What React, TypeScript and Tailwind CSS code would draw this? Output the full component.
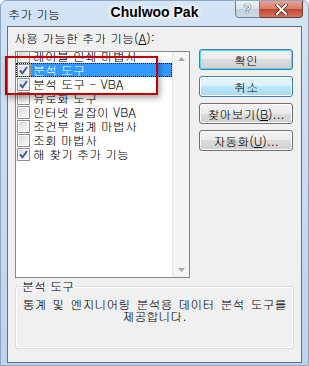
import React from 'react';

const ko = "font-['Gulim','Noto_Sans_CJK_KR',sans-serif]";

const items = [
  { label: '레이블 인쇄 마법사', checked: false },
  { label: '분석 도구', checked: true, selected: true },
  { label: '분석 도구 - VBA', checked: true },
  { label: '유로화 도구', checked: false },
  { label: '인터넷 길잡이 VBA', checked: false },
  { label: '조건부 합계 마법사', checked: false },
  { label: '조회 마법사', checked: false },
  { label: '해 찾기 추가 기능', checked: true },
];

const CheckBox: React.FC<{ checked: boolean }> = ({ checked }) => (
  <div className="w-[13px] h-[13px] shrink-0 border border-[#8e8f8f] bg-white p-[1px]">
    <div className="w-full h-full bg-gradient-to-br from-[#d8d8d8] to-[#fbfbfb] flex items-center justify-center">
      {checked && (
        <svg width="9" height="9" viewBox="0 0 9 9">
          <path d="M1 4.5 L3.5 7.2 L8 1" fill="none" stroke="#3d57ad" strokeWidth="1.9" />
        </svg>
      )}
    </div>
  </div>
);

const Button: React.FC<{ variant?: 'default' | 'hover' | 'normal'; children: React.ReactNode }> = ({
  variant = 'normal',
  children,
}) => {
  const outer =
    variant === 'default'
      ? 'border-[#3c7fb1] shadow-[inset_0_0_0_1px_#4fdcfc]'
      : variant === 'hover'
      ? 'border-[#3c7fb1] shadow-[inset_0_0_0_1px_#ffffff]'
      : 'border-[#707070] shadow-[inset_0_0_0_1px_#fbfbfb]';
  const fill =
    variant === 'hover'
      ? 'bg-[linear-gradient(#eaf6fd_0%,#d9f0fc_50%,#bee6fd_50%,#a7d9f5_100%)]'
      : 'bg-[linear-gradient(#f2f2f2_0%,#ebebeb_50%,#dddddd_50%,#cfcfcf_100%)]';
  return (
    <div
      className={`w-[94px] h-[21px] rounded-[3px] border ${outer} ${fill} flex items-center justify-center text-[12px] text-black`}
    >
      {children}
    </div>
  );
};

const App: React.FC = () => {
  return (
    <div
      className={`relative w-[309px] h-[366px] overflow-hidden rounded-t-[6px] border border-[#8ea8c4] bg-gradient-to-b from-[#d4e4f5] to-[#bcd3ec] flex flex-col ${ko}`}
    >
      {/* Title bar */}
      <div className="h-[25px] shrink-0 flex items-start">
        <div className="pl-[7px] pt-[6px] text-[12px] leading-[14px] text-black">추가 기능</div>
        <div className="flex-1" />
        <div className="flex mr-[5px] mt-[-1px]">
          <div className="w-[25px] h-[18px] rounded-bl-[4px] border border-[#6d7f94] bg-[linear-gradient(#eef3f8_0%,#d7e1ea_50%,#c3d0dc_50%,#cfdbe5_100%)] flex items-center justify-center text-[13px] font-bold text-[#f4f6f8] font-['Liberation_Sans',sans-serif] [text-shadow:0_0_1px_#2b3a4a,0_0_1px_#2b3a4a]">
            ?
          </div>
          <div className="w-[43px] h-[18px] rounded-br-[4px] border border-l-0 border-[#6d3830] bg-[linear-gradient(#e8a293_0%,#d47c6a_50%,#c0462f_50%,#d2735f_100%)] flex items-center justify-center">
            <svg width="13" height="11" viewBox="0 0 13 11">
              <path d="M2 1 L11 10 M11 1 L2 10" stroke="#4a2018" strokeWidth="3.4" strokeLinecap="square" />
              <path d="M2 1 L11 10 M11 1 L2 10" stroke="#ffffff" strokeWidth="2" strokeLinecap="square" />
            </svg>
          </div>
        </div>
      </div>

      {/* Watermark title */}
      <div className="absolute left-0 right-0 top-[3px] text-center font-['Liberation_Sans',sans-serif] font-bold text-[14px] leading-[16px] text-black [text-shadow:0_0_4px_#ffffff,0_0_6px_#ffffff,1px_1px_2px_#ffffff]">
        Chulwoo Pak
      </div>

      {/* Client area */}
      <div className="flex-1 mx-[6px] mb-[2px] border border-[#62707f] bg-[#f0f0f0] px-[7px] pt-[4px] flex flex-col">
        <div className="text-[12px] leading-[14px] text-black ml-[-1px] mb-[6px]">
          사용 가능한 추가 기능(<span className="underline">A</span>):
        </div>

        <div className="flex items-start">
          {/* List box */}
          <div className="w-[175px] h-[227px] border border-[#828790] bg-white flex">
            <div className="flex-1 overflow-hidden">
              <div className="mt-[-3px] flex flex-col">
                {items.map((it) => (
                  <div
                    key={it.label}
                    className={`h-[14px] flex items-center ${
                      it.selected ? 'outline-1 outline-dotted outline-black -outline-offset-1' : ''
                    }`}
                  >
                    <div className="ml-[1px]">
                      <CheckBox checked={it.checked} />
                    </div>
                    <div
                      className={`flex-1 h-full flex items-center pl-[3px] text-[12px] leading-[14px] whitespace-nowrap ${
                        it.selected
                          ? 'bg-[#3399ff] text-white outline-1 outline-dotted outline-[#ff9a1f] -outline-offset-1'
                          : 'text-black'
                      }`}
                    >
                      {it.label}
                    </div>
                  </div>
                ))}
              </div>
            </div>
            {/* Scrollbar (disabled) */}
            <div className="w-[17px] bg-[#f4f4f4] border-l border-[#e6e6e6] flex flex-col items-center justify-between py-[5px]">
              <svg width="7" height="4" viewBox="0 0 7 4">
                <path d="M0 4 L3.5 0 L7 4 Z" fill="#a8a8a8" />
              </svg>
              <svg width="7" height="4" viewBox="0 0 7 4">
                <path d="M0 0 L3.5 4 L7 0 Z" fill="#a8a8a8" />
              </svg>
            </div>
          </div>

          {/* Buttons */}
          <div className="ml-[9px] mt-[-2px] flex flex-col gap-[6px]">
            <Button variant="default">확인</Button>
            <Button variant="hover">취소</Button>
            <Button>
              찾아보기(<span className="underline">B</span>)...
            </Button>
            <Button>
              자동화(<span className="underline">U</span>)...
            </Button>
          </div>
        </div>

        {/* Group box */}
        <fieldset className="mt-[2px] w-[279px] h-[69px] rounded-[3px] border border-[#d5dfe5] shadow-[inset_0_0_0_1px_#ffffff] px-[4px]">
          <legend className="ml-[1px] px-[1px] text-[12px] leading-[12px] text-black">분석 도구</legend>
          <div className="mt-[6px] text-center text-[12px] leading-[12px] text-black [word-spacing:2px]">
            통계 및 엔지니어링 분석용 데이터 분석 도구를
            <br />
            제공합니다.
          </div>
        </fieldset>
      </div>

      {/* Red highlight annotation */}
      <div className="absolute left-[4px] top-[55px] w-[153px] h-[39px] border-2 border-[#c00000] shadow-[2px_3px_6px_rgba(0,0,0,0.35)]" />
    </div>
  );
};

export default App;
